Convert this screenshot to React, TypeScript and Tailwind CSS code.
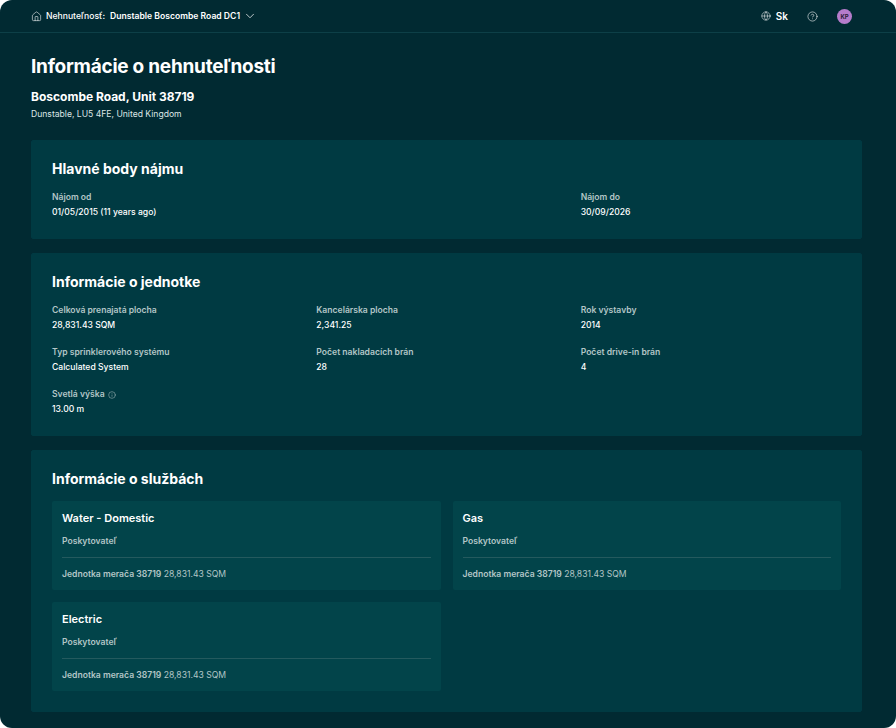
import { ChevronDown, CircleHelp, Globe, Home, Info } from "lucide-react";

function Field({ label, value, info }: { label: string; value: string; info?: boolean }) {
  return (
    <div className="flex flex-col gap-[4px]">
      <div className="flex h-[11px] items-center gap-[3px] text-[8.6px] leading-[11px] font-semibold text-[#b3c6c7]">
        {label}
        {info && <Info className="h-2 w-2" strokeWidth={1.5} />}
      </div>
      <div className="text-[8.6px] leading-[11px] font-medium text-white">{value}</div>
    </div>
  );
}

function Section({ title, gap, children }: { title: string; gap: string; children: React.ReactNode }) {
  return (
    <section className="rounded-[2px] border border-[#003a42] bg-[#003a42] px-5 pt-[19px] pb-5">
      <h2 className={`${gap} text-[14px] leading-[17px] font-bold text-white`}>{title}</h2>
      {children}
    </section>
  );
}

function UtilityCard({ title }: { title: string }) {
  return (
    <div className="rounded-[2px] bg-[#02444a] px-[10px] pt-[10px] pb-[10px]">
      <h3 className="text-[11px] leading-[14px] font-semibold text-white">{title}</h3>
      <div className="mt-[11px] text-[8.6px] leading-[11px] font-semibold text-[#b3c6c7]">Poskytovateľ</div>
      <div className="mt-[10px] border-t border-[#245a5e] pt-[11px] text-[8.6px] leading-[11px] text-[#b3c6c7]">
        <span className="font-semibold">Jednotka merača 38719</span> 28,831.43 SQM
      </div>
    </div>
  );
}

export default function App() {
  return (
    <div className="h-[728px] w-[896px] overflow-hidden bg-white font-['Inter',sans-serif]">
      <div className="h-full overflow-hidden rounded-[12px] bg-[#012a32]">
        <header className="flex h-[33px] items-center justify-between border-b border-[#0d3f47] pr-[44px] pl-[31px] text-white">
          <div className="flex items-center text-[8.6px] font-medium">
            <Home className="mr-[4px] h-[11px] w-[11px]" strokeWidth={1.25} />
            <span>Nehnuteľnosť:</span>
            <span className="ml-[5px] font-semibold">Dunstable Boscombe Road DC1</span>
            <ChevronDown className="ml-[3px] h-[14px] w-[14px]" strokeWidth={1.25} />
          </div>
          <div className="flex items-center">
            <Globe className="h-[10px] w-[10px]" strokeWidth={1.25} />
            <span className="ml-[5px] text-[10px] font-semibold">Sk</span>
            <CircleHelp className="ml-[19px] h-[11px] w-[11px]" strokeWidth={1.25} />
            <div className="ml-[19px] flex h-[15px] w-[15px] items-center justify-center rounded-full bg-[#b57ccb] text-[6px] font-bold text-[#2b1c38]">
              KP
            </div>
          </div>
        </header>
        <main className="pt-[22px] pr-[34px] pl-[31px]">
          <h1 className="text-[19px] leading-[24px] font-bold tracking-[-0.25px] text-white">Informácie o nehnuteľnosti</h1>
          <p className="mt-[10px] text-[12px] leading-[15px] font-bold text-white">Boscombe Road, Unit 38719</p>
          <p className="mt-[5px] text-[8.6px] leading-[11px] text-[#dce6e6]">Dunstable, LU5 4FE, United Kingdom</p>
          <div className="mt-[20px] flex flex-col gap-[14px]">
            <Section title="Hlavné body nájmu" gap="mb-[15px]">
              <div className="grid grid-cols-3 gap-x-1">
                <div className="col-span-2">
                  <Field label="Nájom od" value="01/05/2015 (11 years ago)" />
                </div>
                <Field label="Nájom do" value="30/09/2026" />
              </div>
            </Section>
            <Section title="Informácie o jednotke" gap="mb-[15px]">
              <div className="grid grid-cols-3 gap-x-1 gap-y-[16px]">
                <Field label="Celková prenajatá plocha" value="28,831.43 SQM" />
                <Field label="Kancelárska plocha" value="2,341.25" />
                <Field label="Rok výstavby" value="2014" />
                <Field label="Typ sprinklerového systému" value="Calculated System" />
                <Field label="Počet nakladacích brán" value="28" />
                <Field label="Počet drive-in brán" value="4" />
                <Field label="Svetlá výška" value="13.00 m" info />
              </div>
            </Section>
            <Section title="Informácie o službách" gap="mb-[14px]">
              <div className="grid grid-cols-2 gap-3">
                <UtilityCard title="Water - Domestic" />
                <UtilityCard title="Gas" />
                <UtilityCard title="Electric" />
              </div>
            </Section>
          </div>
        </main>
      </div>
    </div>
  );
}
